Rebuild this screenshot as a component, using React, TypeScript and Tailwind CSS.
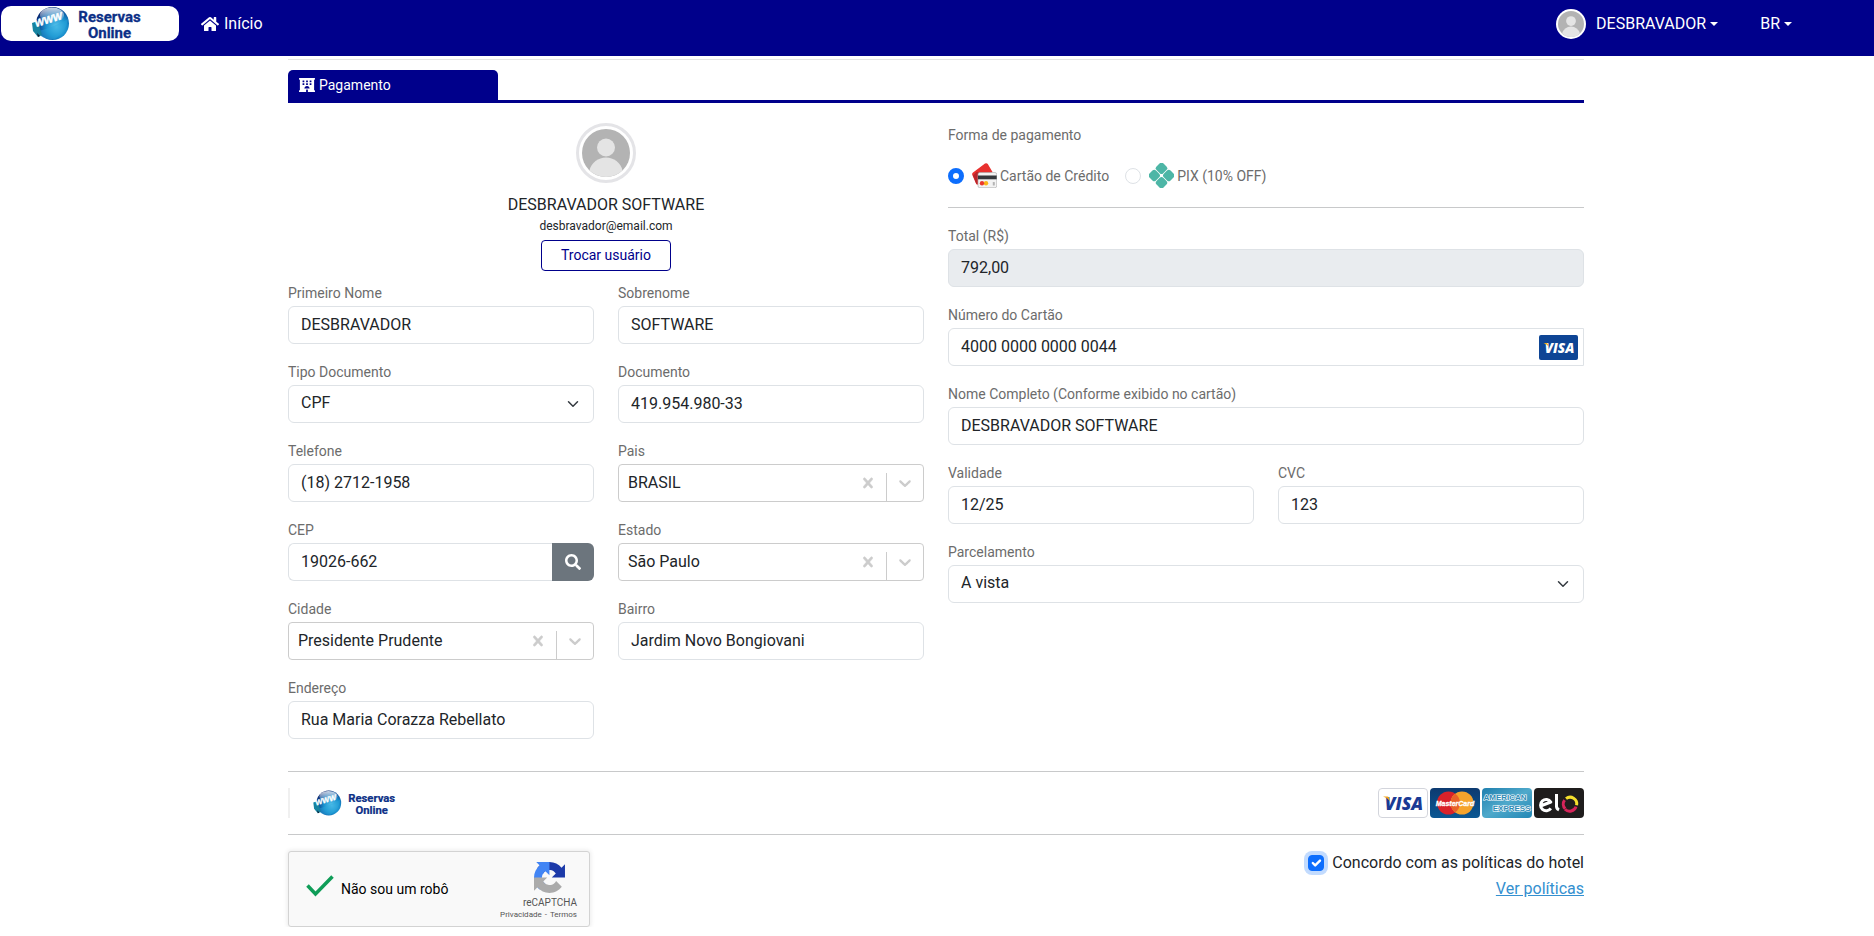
import { useState, type ReactNode } from "react";
import { FaHome, FaHotel, FaSearch } from "react-icons/fa";

const inputBase =
  "block h-[38px] w-full min-w-0 border border-[#dee2e6] px-3 pb-0.5 text-base text-[#212529] outline-none";

function Field({ id, label, children }: { id: string; label: string; children: ReactNode }) {
  return (
    <div className="mb-[18px]">
      <label htmlFor={id} className="mb-0.5 block text-sm leading-[21px] text-[#6c6c6c]">
        {label}
      </label>
      {children}
    </div>
  );
}

function TextField({ id, label, value }: { id: string; label: string; value: string }) {
  return (
    <Field id={id} label={label}>
      <input id={id} type="text" defaultValue={value} className={`${inputBase} rounded-md bg-white`} />
    </Field>
  );
}

function NativeSelect({ id, label, value }: { id: string; label: string; value: string }) {
  return (
    <Field id={id} label={label}>
      <div className="relative">
        <select id={id} className={`${inputBase} appearance-none rounded-md bg-white`}>
          <option>{value}</option>
        </select>
        <svg viewBox="0 0 16 16" className="pointer-events-none absolute top-[13px] right-[15px] size-3" fill="none" stroke="#343a40" strokeWidth="2" strokeLinecap="round" strokeLinejoin="round">
          <path d="m2 5 6 6 6-6" />
        </svg>
      </div>
    </Field>
  );
}

function SearchSelect({ id, label, value }: { id: string; label: string; value: string }) {
  const [text, setText] = useState(value);
  return (
    <Field id={id} label={label}>
      <div className="flex h-[38px] items-center rounded border border-[#cccccc] bg-white">
        <input
          id={id}
          role="combobox"
          aria-expanded={false}
          value={text}
          onChange={(e) => setText(e.target.value)}
          className="h-full min-w-0 flex-1 bg-transparent pb-0.5 pl-[9px] text-base text-[#212529] outline-none"
        />
        <button type="button" aria-label="Limpar" onClick={() => setText("")} className="px-2 text-[#cccccc]">
          <svg viewBox="0 0 20 20" className="size-5" fill="currentColor" stroke="currentColor" strokeWidth="0.500">
            <path d="M14.348 14.849c-0.469 0.469-1.229 0.469-1.697 0l-2.651-3.030-2.651 3.029c-0.469 0.469-1.229 0.469-1.697 0-0.469-0.469-0.469-1.229 0-1.697l2.758-3.15-2.759-3.152c-0.469-0.469-0.469-1.228 0-1.697s1.228-0.469 1.697 0l2.652 3.031 2.651-3.031c0.469-0.469 1.228-0.469 1.697 0s0.469 1.229 0 1.697l-2.758 3.152 2.758 3.15c0.469 0.469 0.469 1.229 0 1.698z" />
          </svg>
        </button>
        <span className="mt-2 h-7 w-px bg-[#cccccc]" />
        <button type="button" aria-label="Abrir opções" className="px-2 text-[#cccccc]">
          <svg viewBox="0 0 20 20" className="size-5" fill="currentColor">
            <path d="M4.516 7.548c0.436-0.446 1.043-0.481 1.576 0l3.908 3.747 3.908-3.747c0.533-0.481 1.141-0.446 1.574 0 0.436 0.445 0.408 1.197 0 1.615-0.406 0.418-4.695 4.502-4.695 4.502-0.217 0.223-0.502 0.335-0.787 0.335s-0.57-0.112-0.789-0.335c0 0-4.287-4.084-4.695-4.502s-0.436-1.17 0-1.615z" />
          </svg>
        </button>
      </div>
    </Field>
  );
}

function Logo({ className, uid }: { className: string; uid: string }) {
  return (
    <svg viewBox="0 0 178 35" className={className} role="img" aria-label="Reservas Online">
      <defs>
        <radialGradient id={`${uid}-globe`} cx="0.62" cy="0.6" r="0.62">
          <stop offset="0" stopColor="#5cc6ee" />
          <stop offset="0.5" stopColor="#1b93cf" />
          <stop offset="0.85" stopColor="#0a4f9c" />
          <stop offset="1" stopColor="#0b2c74" />
        </radialGradient>
        <linearGradient id={`${uid}-shine`} x1="0" y1="0" x2="0" y2="1">
          <stop offset="0" stopColor="#ffffff" stopOpacity="0.8" />
          <stop offset="1" stopColor="#ffffff" stopOpacity="0" />
        </linearGradient>
      </defs>
      <circle cx="51.500" cy="17.500" r="16.500" fill={`url(#${uid}-globe)`} />
      <ellipse cx="51" cy="9" rx="12" ry="7.500" fill={`url(#${uid}-shine)`} />
      <path d="M36 25 Q47 24 67 13 Q65 26 54 33 Q44 34 38 29z" fill="#2aa7dc" opacity="0.45" />
      <path d="M31 17 L37 15 L41 29 L37 31 L32 25z" fill="#1683a0" />
      <path d="M36 27 l3 3 l-2 1z" fill="#0a1a30" />
      <text x="35" y="21" transform="rotate(-17 35 21)" fontFamily="Liberation Sans, sans-serif" fontStyle="italic" fontWeight="700" fontSize="10" fill="#ffffff" stroke="#ffffff" strokeWidth="0.400">
        WWW
      </text>
      <g fontFamily="Roboto, sans-serif" fontWeight="700" fontSize="15" fill="#0c2f86" stroke="#0c2f86" strokeWidth="0.300" textAnchor="middle">
        <text x="108.500" y="16">Reservas</text>
        <text x="108.500" y="32">Online</text>
      </g>
    </svg>
  );
}

function Avatar({ className }: { className: string }) {
  return (
    <svg viewBox="0 0 48 48" className={className} aria-hidden="true">
      <circle cx="24" cy="24" r="24" fill="#b3b3b3" />
      <circle cx="24" cy="18.500" r="9" fill="#e4e4e4" />
      <path d="M7.500 41.400 A17 17 0 0 1 40.500 41.400 A24 24 0 0 1 7.500 41.400z" fill="#e4e4e4" />
    </svg>
  );
}

function Caret() {
  return <span className="ml-1 inline-block border-x-4 border-t-4 border-x-transparent border-t-white align-middle" />;
}

function CreditCardIcon() {
  return (
    <svg viewBox="0 0 25 25" className="size-[25px]" aria-hidden="true">
      <path d="M1 9.500 L13 0.600 Q14.600 -0.300 15.800 1 L20.500 9 L6 21.500 Q5 22 4.200 21 L0.300 12 Q-0.300 10.400 1 9.500z" fill="#e8312f" />
      <path d="M1 12.500 L4.500 9 L9 9.500 L6 12 L5.500 21 L4.200 20.500z" fill="#b9252b" />
      <rect x="6" y="9.500" width="18.700" height="15.200" rx="1.800" fill="#f3f3f3" stroke="#a8a8a8" strokeWidth="0.600" />
      <rect x="6" y="12.500" width="18.700" height="3.800" fill="#36393d" />
      <circle cx="14" cy="20.300" r="2.200" fill="#fbb615" />
      <circle cx="10" cy="20.300" r="2.200" fill="#e93a2c" />
      <rect x="20.800" y="19" width="2" height="3.500" rx="0.600" fill="#b4b4b4" />
    </svg>
  );
}

function PixIcon() {
  return (
    <svg viewBox="0 0 25 25" className="size-[25px]" aria-hidden="true">
      <g fill="#4db6a6" transform="rotate(45 12.500 12.500)">
        <rect x="2.600" y="2.600" width="9.500" height="9.500" rx="2.500" />
        <rect x="12.900" y="2.600" width="9.500" height="9.500" rx="2.500" />
        <rect x="2.600" y="12.900" width="9.500" height="9.500" rx="2.500" />
        <rect x="12.900" y="12.900" width="9.500" height="9.500" rx="2.500" />
      </g>
    </svg>
  );
}

function VisaBadge() {
  return (
    <svg viewBox="0 0 39 25" className="h-[25px] w-[39px]" role="img" aria-label="Visa">
      <rect width="39" height="25" rx="2" fill="#0e4595" />
      <text x="20.500" y="17.500" textAnchor="middle" fontFamily="Open Sans, sans-serif" fontStyle="italic" fontWeight="800" fontSize="13.500" fill="#ffffff">
        VISA
      </text>
      <path d="M4.500 8 h3.200 q1 0.200 1.200 1.200 l0.500 2 q-1.500 -2 -4.900 -3.200z" fill="#f2ae14" />
    </svg>
  );
}

function CardBrands() {
  return (
    <div className="flex gap-0.5">
      <svg viewBox="0 0 50 30" className="h-[30px] w-[50px]" role="img" aria-label="Visa">
        <rect x="0.500" y="0.500" width="49" height="29" rx="3.500" fill="#ffffff" stroke="#d3d5dc" />
        <text x="26" y="21.500" textAnchor="middle" fontFamily="Open Sans, sans-serif" fontStyle="italic" fontWeight="800" fontSize="17.500" fill="#1a3a94">
          VISA
        </text>
        <path d="M5 8.500 h4.500 q1.400 0.200 1.700 1.500 l0.800 3.500 q-2 -3.500 -7 -5z" fill="#f2a31b" />
      </svg>
      <svg viewBox="0 0 50 30" className="h-[30px] w-[50px]" role="img" aria-label="MasterCard">
        <defs>
          <linearGradient id="mc-bg" x1="0" y1="0" x2="0" y2="1">
            <stop offset="0" stopColor="#0d3a70" />
            <stop offset="1" stopColor="#0a5793" />
          </linearGradient>
        </defs>
        <rect width="50" height="30" rx="4" fill="url(#mc-bg)" />
        <circle cx="18.500" cy="15" r="11.500" fill="#d9222a" />
        <circle cx="32" cy="15" r="11.500" fill="#f5a32c" />
        <path d="M25.250 5.700 A11.500 11.500 0 0 1 25.250 24.300 A11.500 11.500 0 0 1 25.250 5.700z" fill="#e8622a" />
        <text x="25" y="18" textAnchor="middle" fontFamily="Liberation Sans, sans-serif" fontStyle="italic" fontWeight="700" fontSize="7" fill="#ffffff" stroke="#ffffff" strokeWidth="0.300">
          MasterCard
        </text>
      </svg>
      <svg viewBox="0 0 50 30" className="h-[30px] w-[50px]" role="img" aria-label="American Express">
        <defs>
          <linearGradient id="amex-bg" x1="0" y1="0" x2="1" y2="1">
            <stop offset="0" stopColor="#1f7fae" />
            <stop offset="0.5" stopColor="#4fa9cb" />
            <stop offset="1" stopColor="#2287b5" />
          </linearGradient>
        </defs>
        <rect width="50" height="30" rx="4" fill="url(#amex-bg)" />
        <g fontFamily="Liberation Sans, sans-serif" fontWeight="700" fontSize="8" fill="#2d8ab5" stroke="#ffffff" strokeWidth="1.200" paintOrder="stroke">
          <text x="1.500" y="12">AMERICAN</text>
          <text x="48.500" y="22.500" textAnchor="end">EXPRESS</text>
        </g>
      </svg>
      <svg viewBox="0 0 50 30" className="h-[30px] w-[50px]" role="img" aria-label="Elo">
        <rect width="50" height="30" rx="4" fill="#1f1d1d" />
        <g fill="none" strokeWidth="3">
          <path d="M6.500 18 L16.800 14 A5.600 5.600 0 1 0 16.800 20.300" stroke="#ffffff" strokeLinejoin="round" />
          <path d="M22.500 6 V18.500 Q22.700 20.800 25 21.800" stroke="#ffffff" />
          <path d="M32 10.700 A6.600 6.600 0 0 1 42.600 17.200" stroke="#f5e02d" />
          <path d="M42 18.600 A6.600 6.600 0 0 1 31 21.200" stroke="#d6245a" />
          <path d="M31.200 20.800 A6.600 6.600 0 0 1 30.600 12.200" stroke="#d6245a" />
        </g>
      </svg>
    </div>
  );
}

function RecaptchaLogo() {
  return (
    <svg viewBox="0 0 64 64" className="size-[31px]" aria-hidden="true">
      <path d="M64 31.955l-.033-1.370V4.687l-7.160 7.160C50.948 4.674 42.033.093 32.050.093c-10.400 0-19.622 4.960-25.458 12.640l11.736 11.860a15.550 15.550 0 0 1 4.754-5.334c2.050-1.600 4.952-2.906 8.968-2.906.485 0 .860.057 1.135.163 4.976.393 9.288 3.140 11.828 7.124l-8.307 8.307L64 31.953" fill="#1c3aa9" />
      <path d="M31.862.094l-1.370.033H4.594l7.160 7.160C4.580 13.147 0 22.060 0 32.046c0 10.400 4.960 19.622 12.640 25.458L24.500 45.768a15.550 15.550 0 0 1-5.334-4.754c-1.600-2.050-2.906-4.952-2.906-8.968 0-.485.057-.860.163-1.135.393-4.976 3.140-9.288 7.124-11.828l8.307 8.307L31.860.095" fill="#4285f4" />
      <path d="M.001 32.045l.033 1.370v25.898l7.160-7.160c5.860 7.173 14.774 11.754 24.760 11.754 10.400 0 19.622-4.960 25.458-12.640l-11.736-11.860a15.550 15.550 0 0 1-4.754 5.334c-2.050 1.600-4.952 2.906-8.968 2.906-.485 0-.860-.057-1.135-.163-4.976-.393-9.288-3.140-11.828-7.124l8.307-8.307c-10.522.040-22.400.066-27.295-.005" fill="#ababab" />
    </svg>
  );
}

function PaymentOption({ id, label, icon, checked, onSelect }: { id: string; label: string; icon: ReactNode; checked: boolean; onSelect: () => void }) {
  return (
    <div className="flex items-center">
      <input
        id={id}
        type="radio"
        name="pagamento"
        checked={checked}
        onChange={onSelect}
        className="size-4 appearance-none rounded-full border border-[#dee2e6] bg-white checked:border-[5px] checked:border-[#0d6efd]"
      />
      <label htmlFor={id} className="flex items-center gap-[3px] pl-2 text-sm text-[#6c6c6c]">
        {icon}
        {label}
      </label>
    </div>
  );
}

export default function App() {
  const [method, setMethod] = useState("card");
  const [agreed, setAgreed] = useState(true);

  return (
    <div className="bg-white font-['Roboto',sans-serif] text-base text-[#212529]">
      <header className="flex h-14 items-center justify-between bg-[#00008b] pb-[9px] pl-px text-white">
        <div className="flex items-center">
          <a href="#" className="flex rounded-[10px] bg-white">
            <Logo className="h-[35px] w-[178px]" uid="top" />
          </a>
          <a href="#" className="ml-[22px] flex items-center gap-[5px]">
            <FaHome className="size-[18px]" />
            Início
          </a>
        </div>
        <div className="flex items-center pr-[82px]">
          <button type="button" className="flex items-center">
            <span className="mr-[10px] rounded-full bg-white p-0.5">
              <Avatar className="size-[26px]" />
            </span>
            DESBRAVADOR
            <Caret />
          </button>
          <button type="button" className="ml-[42px] flex items-center">
            BR
            <Caret />
          </button>
        </div>
      </header>

      <main className="pr-0.5">
        <div className="mx-auto max-w-[1320px] px-3">
          <hr className="mt-[3px] border-[#e4e4e4]" />
          <div className="mt-[10px] flex border-b-[3px] border-[#00008b]">
            <h1 className="flex h-[30px] w-[210px] items-center gap-1 rounded-t-[5px] bg-[#00008b] pl-[11px] text-sm text-white">
              <FaHotel className="size-4" />
              Pagamento
            </h1>
          </div>

          <form>
            <div className="grid grid-cols-2 gap-x-6">
              <section className="pt-5">
                <div className="mb-3 flex flex-col items-center">
                  <span className="mb-[10px] rounded-full border-[3px] border-[#e4e4e7] p-[3px]">
                    <Avatar className="size-12" />
                  </span>
                  <p className="leading-6">DESBRAVADOR SOFTWARE</p>
                  <p className="mb-[5px] text-xs leading-[18px]">desbravador@email.com</p>
                  <button type="button" className="h-[31px] w-[130px] rounded border border-[#00008b] pb-0.5 text-sm text-[#00008b]">
                    Trocar usuário
                  </button>
                </div>
                <div className="grid grid-cols-2 gap-x-6">
                  <TextField id="nome" label="Primeiro Nome" value="DESBRAVADOR" />
                  <TextField id="sobrenome" label="Sobrenome" value="SOFTWARE" />
                  <NativeSelect id="tipo" label="Tipo Documento" value="CPF" />
                  <TextField id="documento" label="Documento" value="419.954.980-33" />
                  <TextField id="telefone" label="Telefone" value="(18) 2712-1958" />
                  <SearchSelect id="pais" label="Pais" value="BRASIL" />
                  <Field id="cep" label="CEP">
                    <div className="flex">
                      <input id="cep" type="text" defaultValue="19026-662" className={`${inputBase} flex-1 rounded-l-md border-r-0 bg-white`} />
                      <button type="button" aria-label="Buscar CEP" className="flex w-[42px] items-center justify-center rounded-r-md bg-[#6c757d] text-white">
                        <FaSearch className="size-4" />
                      </button>
                    </div>
                  </Field>
                  <SearchSelect id="estado" label="Estado" value="São Paulo" />
                  <SearchSelect id="cidade" label="Cidade" value="Presidente Prudente" />
                  <TextField id="bairro" label="Bairro" value="Jardim Novo Bongiovani" />
                  <TextField id="endereco" label="Endereço" value="Rua Maria Corazza Rebellato" />
                </div>
              </section>

              <section className="pt-[22px]">
                <fieldset>
                  <legend className="text-sm leading-[21px] text-[#6c6c6c]">Forma de pagamento</legend>
                  <div className="mt-[17px] flex gap-4">
                    <PaymentOption id="cartao" label="Cartão de Crédito" icon={<CreditCardIcon />} checked={method === "card"} onSelect={() => setMethod("card")} />
                    <PaymentOption id="pix" label="PIX (10% OFF)" icon={<PixIcon />} checked={method === "pix"} onSelect={() => setMethod("pix")} />
                  </div>
                </fieldset>
                <hr className="mt-[19px] mb-[18px] border-[#c8c9ca]" />
                <Field id="total" label="Total (R$)">
                  <input id="total" type="text" readOnly value="792,00" className={`${inputBase} rounded-md bg-[#e9ecef]`} />
                </Field>
                <Field id="cartao-numero" label="Número do Cartão">
                  <div className="flex items-center rounded-l-md border border-[#dee2e6]">
                    <input id="cartao-numero" type="text" defaultValue="4000 0000 0000 0044" className="h-9 min-w-0 flex-1 bg-transparent px-3 pb-0.5 outline-none" />
                    <span className="pr-[5px]">
                      <VisaBadge />
                    </span>
                  </div>
                </Field>
                <TextField id="titular" label="Nome Completo (Conforme exibido no cartão)" value="DESBRAVADOR SOFTWARE" />
                <div className="grid grid-cols-2 gap-x-6">
                  <TextField id="validade" label="Validade" value="12/25" />
                  <TextField id="cvc" label="CVC" value="123" />
                </div>
                <NativeSelect id="parcelas" label="Parcelamento" value="A vista" />
              </section>
            </div>

            <div className="mt-[14px] flex items-center justify-between border-y border-[#c8c9ca] py-4">
              <div className="flex w-[136px] border-l-2 border-[#f0f0f0]">
                <Logo className="h-[30px] w-[134px]" uid="bottom" />
              </div>
              <CardBrands />
            </div>

            <div className="mt-4 flex items-start justify-between">
              <div className="flex h-[76px] w-[302px] items-center rounded-[3px] border border-[#d3d3d3] bg-[#f9f9f9] pl-[17px] shadow-[0_0_4px_1px_rgba(0,0,0,0.08)]">
                <svg viewBox="0 0 28 22" className="mb-1.5 h-[22px] w-7" fill="none" stroke="#0f9d58" strokeWidth="3.500" aria-hidden="true">
                  <path d="M1.500 10.500 L9.500 19 L26.500 1.500" />
                </svg>
                <span className="ml-[7px] flex-1 text-sm text-black">Não sou um robô</span>
                <div className="mr-3 flex w-[77px] flex-col items-end pt-1 text-[#555555]">
                  <span className="pr-3">
                    <RecaptchaLogo />
                  </span>
                  <span className="mt-1 text-[10px] leading-3">reCAPTCHA</span>
                  <span className="flex gap-[3px] text-[8px] leading-3">
                    <a href="#">Privacidade</a>
                    <span>-</span>
                    <a href="#">Termos</a>
                  </span>
                </div>
              </div>

              <div className="flex flex-col items-end gap-0.5">
                <label htmlFor="concordo" className="flex items-center gap-2 leading-6">
                  <span className="relative flex">
                    <input
                      id="concordo"
                      type="checkbox"
                      checked={agreed}
                      onChange={(e) => setAgreed(e.target.checked)}
                      className="peer size-4 appearance-none rounded border border-[#86b7fe] bg-white ring-4 ring-[#c2dbfe] checked:border-[#0d6efd] checked:bg-[#0d6efd]"
                    />
                    <svg viewBox="0 0 20 20" className="pointer-events-none absolute inset-0 hidden size-4 peer-checked:block" fill="none" stroke="#ffffff" strokeWidth="3" strokeLinecap="round" strokeLinejoin="round">
                      <path d="m6 10 3 3 6-6" />
                    </svg>
                  </span>
                  Concordo com as políticas do hotel
                </label>
                <a href="#" className="leading-6 text-[#3490d0] underline">
                  Ver políticas
                </a>
              </div>
            </div>
          </form>
        </div>
      </main>
    </div>
  );
}
